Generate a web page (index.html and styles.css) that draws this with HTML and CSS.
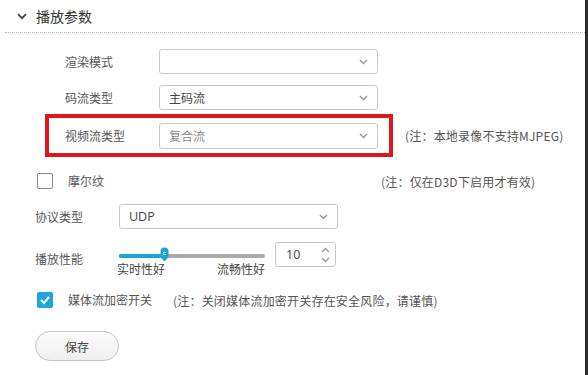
FILE: index.html
```html
<!DOCTYPE html>
<html lang="zh-CN">
<head>
<meta charset="utf-8">
<title>播放参数</title>
<link rel="stylesheet" href="styles.css">
</head>
<body>
<div class="page">
  <div class="header">
    <svg class="hdr-chev" width="10" height="7" viewBox="0 0 10 7"><path d="M1 1.2 L5 5.2 L9 1.2" fill="none" stroke="#444" stroke-width="1.8"/></svg>
    <span class="title">播放参数</span>
  </div>

  <div class="form">
    <div class="row indent r1">
      <span class="lbl w94">渲染模式</span>
      <div class="select w219"><span class="val"></span><svg class="chev" width="9" height="6" viewBox="0 0 9 6"><path d="M1 1 L4.5 4.5 L8 1" fill="none" stroke="#9a9a9a" stroke-width="1.5"/></svg></div>
    </div>
    <div class="row indent r2">
      <span class="lbl w94">码流类型</span>
      <div class="select w219"><span class="val">主码流</span><svg class="chev" width="9" height="6" viewBox="0 0 9 6"><path d="M1 1 L4.5 4.5 L8 1" fill="none" stroke="#9a9a9a" stroke-width="1.5"/></svg></div>
    </div>
    <div class="row r3">
      <div class="redbox">
        <span class="lbl w94">视频流类型</span>
        <div class="select w219 tall"><span class="val dim">复合流</span><svg class="chev" width="9" height="6" viewBox="0 0 9 6"><path d="M1 1 L4.5 4.5 L8 1" fill="none" stroke="#9a9a9a" stroke-width="1.5"/></svg></div>
      </div>
      <span class="note n3">(注：本地录像不支持MJPEG)</span>
    </div>
    <div class="row r4">
      <span class="cb"></span>
      <span class="lbl cblbl w311">摩尔纹</span>
      <span class="note">(注：仅在D3D下启用才有效)</span>
    </div>
    <div class="row r5">
      <span class="lbl w84">协议类型</span>
      <div class="select w219"><span class="val latin">UDP</span><svg class="chev" width="9" height="6" viewBox="0 0 9 6"><path d="M1 1 L4.5 4.5 L8 1" fill="none" stroke="#9a9a9a" stroke-width="1.5"/></svg></div>
    </div>
    <div class="row r6">
      <span class="lbl w84 perf">播放性能</span>
      <div class="slider">
        <div class="track"><div class="fill" style="width:45px"></div>
          <svg class="thumb" width="9" height="15" viewBox="0 0 9 15"><path d="M0.5 4 Q0.5 0.5 4.5 0.5 Q8.5 0.5 8.5 4 L8.5 10 L4.5 14.5 L0.5 10 Z" fill="#1ba3dc"/><path d="M3 5.5 H6 M3 7.5 H6" stroke="#fff" stroke-width="0.9"/></svg>
        </div>
        <div class="slabels"><span>实时性好</span><span>流畅性好</span></div>
      </div>
      <div class="num"><span class="latin">10</span>
        <svg class="spin" width="9" height="16" viewBox="0 0 9 16"><path d="M1 5 L4.5 1.5 L8 5 M1 11 L4.5 14.5 L8 11" fill="none" stroke="#9a9a9a" stroke-width="1.4"/></svg>
      </div>
    </div>
    <div class="row r7">
      <span class="cb checked"><svg width="12" height="10" viewBox="0 0 12 10"><path d="M2 5 L5 8 L10 2" fill="none" stroke="#fff" stroke-width="2"/></svg></span>
      <span class="lbl cblbl w105">媒体流加密开关</span>
      <span class="note">(注：关闭媒体流加密开关存在安全风险，请谨慎)</span>
    </div>
    <div class="row r8">
      <button class="btn">保存</button>
    </div>
  </div>
</div>
</body>
</html>
```

FILE: styles.css
```css
html, body {
  margin: 0;
  padding: 0;
  background: #fff;
}
body {
  font-family: "Noto Sans CJK SC", "Noto Sans", sans-serif;
  font-size: 12px;
  color: #555;
  width: 588px;
  height: 375px;
  overflow: hidden;
}
.page {
  width: 585px;
  height: 375px;
  border-right: 3px solid #2a2a2a;
}
.header {
  margin-left: 5px;
  height: 32px;
  display: flex;
  align-items: center;
  padding-left: 12px;
  border-bottom: 1px dotted #b5b5b5;
}
.hdr-chev {
  margin-right: 9px;
  margin-top: 1px;
}
.title {
  font-size: 14px;
  color: #333;
}
.form {
  display: flex;
  flex-direction: column;
}
.row {
  display: flex;
  align-items: center;
}
.indent { padding-left: 65px; }
.r1 { margin-top: 16px; }
.r2 { margin-top: 11px; }
.r3 { margin-top: 4px; padding-left: 45px; }
.r4 { margin-top: 16px; padding-left: 37px; height: 16px; }
.r5 { margin-top: 15px; padding-left: 35px; }
.r6 { margin-top: 13px; padding-left: 35px; align-items: flex-start; }
.r7 { margin-top: 16px; padding-left: 37px; height: 16px; }
.r8 { margin-top: 23px; padding-left: 35px; }

.lbl { color: #555; line-height: 16px; white-space: nowrap; }
.w94 { width: 94px; flex: none; }
.w84 { width: 84px; flex: none; }
.w311 { width: 313px; flex: none; }
.w105 { width: 105px; flex: none; }
.cblbl { margin-left: 15px; }

.select {
  box-sizing: border-box;
  height: 25px;
  border: 1px solid #c8c8c8;
  border-radius: 3px;
  background: #fff;
  display: flex;
  align-items: center;
  justify-content: space-between;
  padding: 0 9px 0 9px;
}
.select.tall { height: 26px; }
.w219 { width: 219px; }
.val { color: #444; font-size: 12px; }
.val.dim { color: #8a8a8a; }
.latin { font-family: "Open Sans", "Noto Sans", sans-serif; font-size: 12.5px; }
.chev { margin-top: 1px; }

.redbox {
  box-sizing: border-box;
  width: 348px;
  height: 43px;
  border: 4px solid #dc1720;
  display: flex;
  align-items: center;
  padding-left: 16px;
}
.note { color: #555; white-space: nowrap; letter-spacing: 0.2px; }
.n3 { margin-left: 12px; }

.cb {
  box-sizing: border-box;
  width: 16px;
  height: 16px;
  border: 1px solid #888;
  border-radius: 2px;
  background: #fff;
  flex: none;
  display: flex;
  align-items: center;
  justify-content: center;
}
.cb.checked {
  background: #1ea6df;
  border-color: #1ea6df;
}

.perf { margin-top: 9px; }
.slider {
  width: 146px;
  flex: none;
  display: flex;
  flex-direction: column;
}
.track {
  position: relative;
  margin-top: 12px;
  height: 4px;
  background: #aaa;
  border-radius: 2px;
}
.fill {
  height: 4px;
  background: #1ba3dc;
  border-radius: 2px 0 0 2px;
}
.thumb {
  position: absolute;
  left: 41px;
  top: -7px;
}
.slabels {
  display: flex;
  justify-content: space-between;
  margin-left: -2px;
  margin-top: 4px;
  line-height: 14px;
  color: #444;
  font-size: 12px;
}
.num {
  box-sizing: border-box;
  margin-left: 10px;
  width: 61px;
  height: 25px;
  border: 1px solid #c8c8c8;
  border-radius: 3px;
  display: flex;
  align-items: center;
  justify-content: space-between;
  padding: 0 5px 0 10px;
  color: #444;
}

.btn {
  box-sizing: border-box;
  width: 84px;
  height: 30px;
  border: 1px solid #c4c4c4;
  border-radius: 15px;
  background: linear-gradient(#fbfbfb, #efefef);
  font-family: "Noto Sans CJK SC", "Noto Sans", sans-serif;
  font-size: 12px;
  color: #444;
  padding: 0;
}
```
